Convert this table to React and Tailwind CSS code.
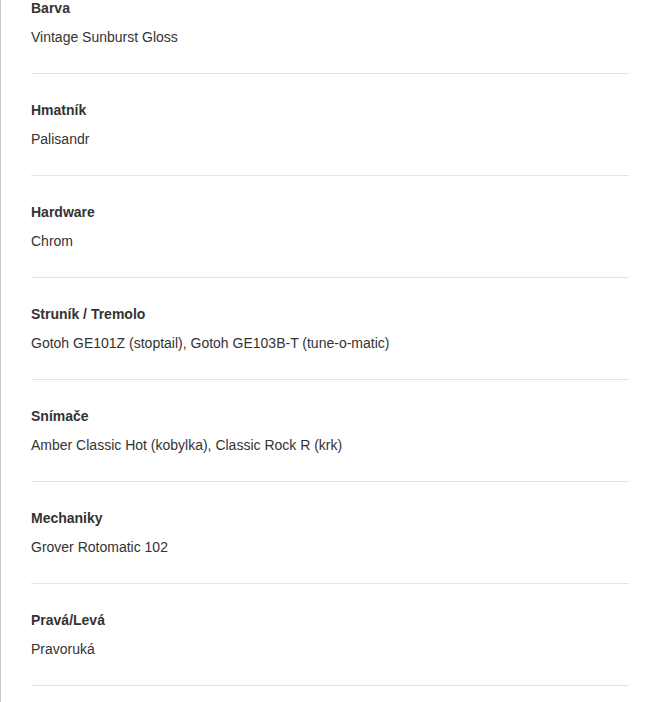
import React from "react";

const specs = [
  { label: "Barva", value: "Vintage Sunburst Gloss" },
  { label: "Hmatník", value: "Palisandr" },
  { label: "Hardware", value: "Chrom" },
  { label: "Struník / Tremolo", value: "Gotoh GE101Z (stoptail), Gotoh GE103B-T (tune-o-matic)" },
  { label: "Snímače", value: "Amber Classic Hot (kobylka), Classic Rock R (krk)" },
  { label: "Mechaniky", value: "Grover Rotomatic 102" },
  { label: "Pravá/Levá", value: "Pravoruká" },
];

export default function App() {
  return (
    <div className="h-[702px] overflow-hidden bg-white font-['Liberation_Sans',Arial,sans-serif] text-[14px] text-[#333]">
      <div className="flex h-full flex-col border-l border-[#cbcbcb] pl-[30px] pr-[20px]">
        <div className="mt-[-28px]">
          {specs.map((s) => (
            <div key={s.label} className="border-b border-[#e3e3e3] pt-[26px] pb-[26px]">
              <div className="font-bold leading-[20px]">{s.label}</div>
              <div className="mt-[9px] leading-[20px]">{s.value}</div>
            </div>
          ))}
        </div>
      </div>
    </div>
  );
}
